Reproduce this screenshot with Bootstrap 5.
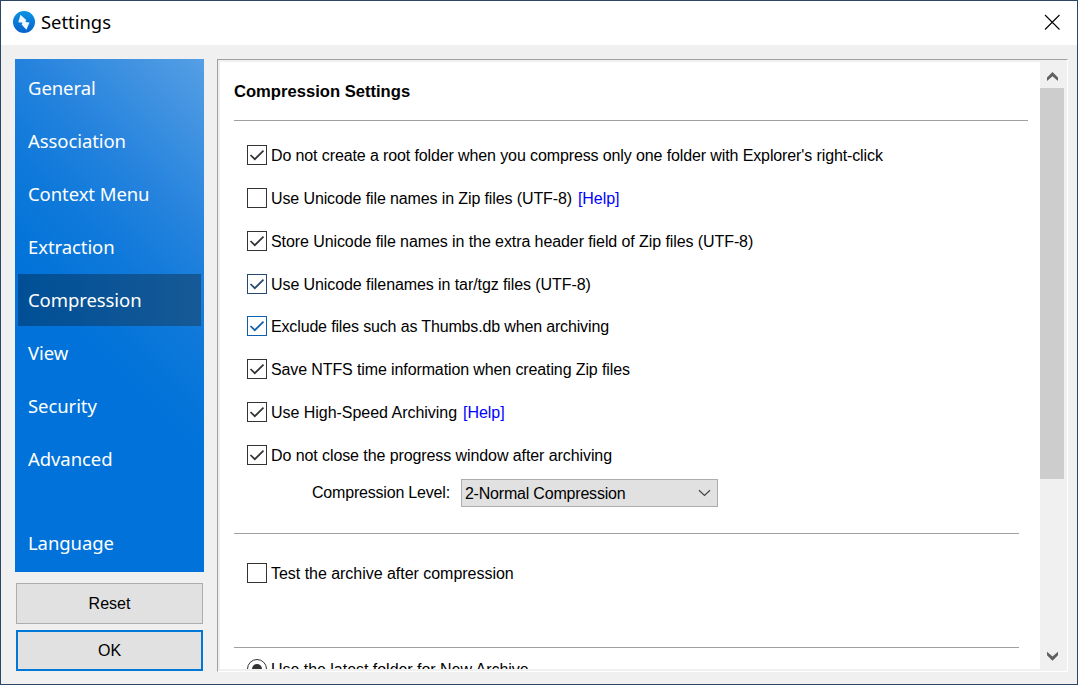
<!DOCTYPE html>
<html lang="en">
<head>
<meta charset="utf-8">
<meta name="viewport" content="width=device-width, initial-scale=1">
<title>Settings</title>
<link href="https://cdn.jsdelivr.net/npm/bootstrap@5.3.0/dist/css/bootstrap.min.css" rel="stylesheet">
<style>
  body { font: 16px/20px "Liberation Sans", Arial, sans-serif; color: #000; }
  .window { width: 1078px; height: 685px; border: 1px solid #2b4765; background: #f0f0f0; }
  .titlebar { height: 44px; padding: 0 17px 2px 12px; }
  .titlebar h1 { font: 18.4px/24px "Noto Sans", "Open Sans", sans-serif; margin-left: 6px; }
  .main-area { padding: 14px 9px 12px 14px; }
  .side { width: 189px; margin-right: 13px; }
  .side .nav { height: 513px; padding: 3px; background: linear-gradient(225deg, #559fe5 0%, #4394e1 10%, #2382dd 27%, #0f79da 40%, #0072d9 57%, #0072d9 100%); }
  .side .nav-link { height: 52px; margin-bottom: 1px; padding: 0 10px; border-radius: 0; color: #fff; font: 18.5px/51px "Noto Sans", "Open Sans", sans-serif; letter-spacing: -.08px; }
  .side .nav-link.active { background: linear-gradient(90deg, #004f96, #165996); color: #fff; }
  .win-btn { width: 187px; height: 41px; margin-left: 1px; padding: 0; border: 1px solid #adadad; border-radius: 0; background: #e1e1e1; font-size: 16px; line-height: 20px; color: #000; }
  .win-btn.default { border: 2px solid #0078d7; }
  .panel { height: 613px; border: 1px solid; border-color: #a0a0a0 #fff #fff #a0a0a0; padding: 2px 3px 2px 2px; }
  .content { height: 607px; padding-left: 14px; }
  .content h2 { height: 58px; padding-top: 20px; font-size: 16.6px; line-height: 20px; font-weight: bold; }
  .rule { height: 1px; background: #a0a0a0; width: 785px; }
  .rule.wide { width: 794px; }
  .opt { height: 43px; padding-left: 13px; white-space: nowrap; line-height: 22px; }
  .box { width: 20px; height: 20px; margin-right: 4px; border: 1px solid currentColor; color: #333; background: #fff; }
  .box svg { display: block; }
  .help { color: #00f; text-decoration: none; margin-left: 6px; letter-spacing: -.05px; }
  .level { margin: 0 0 26px 78px; line-height: 22px; }
  .combo { width: 257px; height: 28px; border: 1px solid #adadad; background: #e1e1e1; padding: 0 6px 0 3px; margin-left: 11px; }
  .combo span { padding-top: 1px; }
  .scroll { width: 24px; }
  .scroll .thumb { height: 391px; background: #cdcdcd; }
  .t-1 { letter-spacing: -.03px; }
  .t-2 { letter-spacing: -.085px; }
  .t-3 { letter-spacing: -.115px; }
  .t-4 { letter-spacing: -.15px; }
  .t-5 { letter-spacing: -.195px; }
</style>
</head>
<body class="overflow-hidden">
<div class="window d-flex flex-column">
  <header class="titlebar bg-white d-flex align-items-center flex-shrink-0">
    <svg width="22" height="22" viewBox="0 0 22 22">
      <defs><linearGradient id="lg" x1="0" y1="0" x2="0" y2="1"><stop offset="0" stop-color="#0a93e3"/><stop offset="1" stop-color="#0862cd"/></linearGradient></defs>
      <circle cx="11" cy="11" r="11" fill="url(#lg)"/>
      <path d="M7.500 3.800 13.200 9 12.500 11 16.500 11.500 13.400 18.700 8.600 13.400 9.600 11.700 5.300 11.200Z" fill="#fff" fill-opacity=".95"/>
    </svg>
    <h1 class="mb-0">Settings</h1>
    <svg class="ms-auto" width="16" height="16" viewBox="0 0 16 16"><path d="M1 1l14.500 14.500M15.500 1L1 15.500" stroke="#000" stroke-width="1.1"/></svg>
  </header>
  <div class="main-area d-flex flex-grow-1">
    <aside class="side flex-shrink-0">
      <nav class="nav flex-column flex-nowrap">
        <a class="nav-link">General</a>
        <a class="nav-link">Association</a>
        <a class="nav-link">Context Menu</a>
        <a class="nav-link">Extraction</a>
        <a class="nav-link active">Compression</a>
        <a class="nav-link">View</a>
        <a class="nav-link">Security</a>
        <a class="nav-link">Advanced</a>
        <a class="nav-link mt-auto mb-0">Language</a>
      </nav>
      <button class="btn win-btn d-block" style="margin-top:11px">Reset</button>
      <button class="btn win-btn default d-block" style="margin-top:6px">OK</button>
    </aside>
    <main class="panel d-flex flex-grow-1">
      <section class="content bg-white flex-grow-1 overflow-hidden">
        <h2 class="mb-0">Compression Settings</h2>
        <div class="rule wide" style="margin-bottom:24px"></div>
        <div class="opt d-flex"><span class="box"><svg width="18" height="18"><path d="M2.500 9l4.300 4.200 8.700-8.500" fill="none" stroke="currentColor" stroke-width="1.7"/></svg></span><span class="t-3">Do not create a root folder when you compress only one folder with Explorer's right-click</span></div>
        <div class="opt d-flex"><span class="box"></span><span class="t-3">Use Unicode file names in Zip files (UTF-8)</span><a class="help">[Help]</a></div>
        <div class="opt d-flex"><span class="box"><svg width="18" height="18"><path d="M2.500 9l4.300 4.200 8.700-8.500" fill="none" stroke="currentColor" stroke-width="1.7"/></svg></span><span class="t-2">Store Unicode file names in the extra header field of Zip files (UTF-8)</span></div>
        <div class="opt d-flex" style="height:42px"><span class="box" style="color:#24486e"><svg width="18" height="18"><path d="M2.500 9l4.300 4.200 8.700-8.500" fill="none" stroke="currentColor" stroke-width="1.7"/></svg></span><span class="t-2">Use Unicode filenames in tar/tgz files (UTF-8)</span></div>
        <div class="opt d-flex"><span class="box" style="color:#0e60ac"><svg width="18" height="18"><path d="M2.500 9l4.300 4.200 8.700-8.500" fill="none" stroke="currentColor" stroke-width="1.7"/></svg></span><span class="t-4">Exclude files such as Thumbs.db when archiving</span></div>
        <div class="opt d-flex"><span class="box"><svg width="18" height="18"><path d="M2.500 9l4.300 4.200 8.700-8.500" fill="none" stroke="currentColor" stroke-width="1.7"/></svg></span><span class="t-3">Save NTFS time information when creating Zip files</span></div>
        <div class="opt d-flex"><span class="box"><svg width="18" height="18"><path d="M2.500 9l4.300 4.200 8.700-8.500" fill="none" stroke="currentColor" stroke-width="1.7"/></svg></span><span class="t-1">Use High-Speed Archiving</span><a class="help">[Help]</a></div>
        <div class="opt d-flex" style="height:34px"><span class="box"><svg width="18" height="18"><path d="M2.500 9l4.300 4.200 8.700-8.500" fill="none" stroke="currentColor" stroke-width="1.7"/></svg></span><span class="t-2">Do not close the progress window after archiving</span></div>
        <div class="level d-flex align-items-center">
          <span class="t-5">Compression Level:</span>
          <div class="combo d-flex align-items-center justify-content-between">
            <span class="t-5">2-Normal Compression</span>
            <svg width="13" height="8" viewBox="0 0 13 8"><path d="M1 1.200l5.500 5.300L12 1.200" fill="none" stroke="#444" stroke-width="1.200"/></svg>
          </div>
        </div>
        <div class="rule" style="margin-bottom:29px"></div>
        <div class="opt d-flex" style="height:84px"><span class="box"></span><span class="t-1">Test the archive after compression</span></div>
        <div class="rule" style="margin-bottom:11px"></div>
        <div class="opt d-flex"><span class="box rounded-circle"><svg width="18" height="18"><circle cx="9" cy="9" r="5" fill="currentColor"/></svg></span><span class="t-1">Use the latest folder for New Archive</span></div>
      </section>
      <div class="scroll d-flex flex-column align-items-center flex-shrink-0">
        <svg width="24" height="26" viewBox="0 0 24 26" class="flex-shrink-0"><path d="M7 15.500V19l5.500-4.700L18 19v-3.500L12.500 10z" fill="#606060"/></svg>
        <div class="thumb w-100"></div>
        <svg width="24" height="26" viewBox="0 0 24 26" class="mt-auto flex-shrink-0"><path d="M7 12.200V8.700l5.500 4.700L18 8.700v3.500l-5.500 5.500z" fill="#606060"/></svg>
      </div>
    </main>
  </div>
</div>
<script src="https://cdn.jsdelivr.net/npm/bootstrap@5.3.0/dist/js/bootstrap.bundle.min.js"></script>
</body>
</html>
